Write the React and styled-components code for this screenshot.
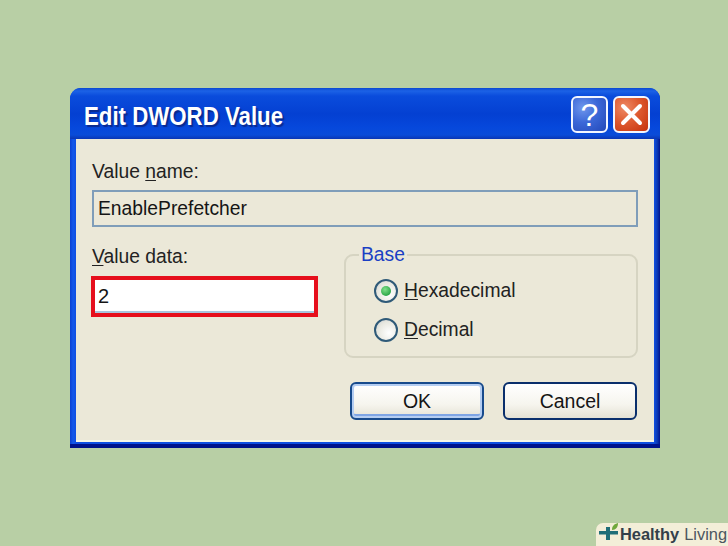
import React from 'react';
import styled, { createGlobalStyle } from 'styled-components';

const GlobalStyle = createGlobalStyle`
  html, body {
    margin: 0;
    padding: 0;
    background: #b8cfa5;
  }
  body {
    font-family: "Liberation Sans", Arial, sans-serif;
  }
`;

const Page = styled.div`
  position: relative;
  width: 728px;
  height: 546px;
  overflow: hidden;
  padding: 88px 0 0 70px;
  box-sizing: border-box;
`;

const Window = styled.div`
  width: 590px;
  height: 360px;
  display: flex;
  flex-direction: column;
  box-sizing: border-box;
  border-radius: 11px 11px 0 0;
  background: linear-gradient(90deg, #0a3fd0 0, #1458ea 3px, #0f4fe2 6px, #0f4fe2 584px, #0a3bb8 587px, #00138c 100%);
  padding: 0 6px 6px;
  box-shadow: inset 0 -4px 0 #00138c;
`;

const TitleBar = styled.div`
  height: 51px;
  flex: none;
  margin: 0 -6px;
  padding: 0 10px 0 14px;
  display: flex;
  align-items: center;
  gap: 5px;
  border-radius: 11px 11px 0 0;
  background: linear-gradient(180deg, #0a48d0 0, #1c62e6 3px, #0a4cdc 8px, #0440d2 26px, #0648dc 40px, #0a4cd8 47px, #0a36b4 100%);
`;

const Title = styled.div`
  flex: 1;
  margin-top: 5px;
  color: #fff;
  font-size: 25px;
  font-weight: bold;
  white-space: nowrap;
  transform: scaleX(0.89);
  transform-origin: left center;
  text-shadow: 2px 2px 1px #0a2a90;
`;

const CaptionButton = styled.div`
  width: 37px;
  height: 37px;
  margin-top: 2px;
  box-sizing: border-box;
  display: flex;
  align-items: center;
  justify-content: center;
  border: 2px solid #f2f6ff;
  border-radius: 6px;
  color: #fff;
  font-size: 32px;
  background: ${p => p.$danger
    ? 'radial-gradient(circle at 30% 30%, #ee8a66 0, #de5a30 45%, #c4300c 100%)'
    : 'radial-gradient(circle at 30% 30%, #6f97ec 0, #3c68d8 45%, #2348b8 100%)'};
`;

const Body = styled.div`
  flex: 1;
  background: #ebe8d8;
  padding: 21px 16px 0;
  border-bottom: 2px solid #f8f6e8;
  display: flex;
  flex-direction: column;
  min-height: 0;
`;

const Label = styled.div`
  font-size: 19.3px;
  line-height: 24px;
  color: #222;
`;

const Key = styled.span`
  text-decoration: underline;
  text-underline-offset: 2px;
`;

const NameField = styled.div`
  height: 37px;
  margin-top: 6px;
  box-sizing: border-box;
  display: flex;
  align-items: center;
  padding-left: 4px;
  border: 2px solid #7f9db9;
  background: #ebe8d8;
  color: #151515;
  font-size: 19.3px;
`;

const Columns = styled.div`
  display: flex;
  justify-content: space-between;
  margin-top: 17px;
`;

const DataColumn = styled.div`
  width: 227px;
  margin-left: -1px;
`;

const DataField = styled.div`
  height: 41px;
  margin-top: 7px;
  box-sizing: border-box;
  display: flex;
  align-items: center;
  padding-left: 3px;
  border: 4px solid #e60f1c;
  background: #fff;
  box-shadow: inset 0 -2px 0 #a9c4dd;
  color: #151515;
  font-size: 20px;
`;

const DataLabel = styled(Label)`
  margin: 1px 0 0 1px;
`;

const Group = styled.fieldset`
  width: 294px;
  height: 114px;
  margin: 0;
  box-sizing: border-box;
  padding: 5px 0 0 28px;
  border: 2px solid #d6d4c2;
  border-radius: 9px;
`;

const GroupTitle = styled.legend`
  margin-left: -15px;
  padding: 0 2px;
  font-size: 19.3px;
  line-height: 22px;
  color: #1a3fc4;
`;

const RadioRow = styled.div`
  height: 39px;
  display: flex;
  align-items: center;
  gap: 6px;
  font-size: 19.3px;
  color: #222;
`;

const Radio = styled.span`
  width: 24px;
  height: 24px;
  flex: none;
  box-sizing: border-box;
  display: flex;
  align-items: center;
  justify-content: center;
  border: 2px solid #2f5a78;
  border-radius: 50%;
  background: radial-gradient(circle at 65% 65%, #fff 0, #e8e8e0 60%, #c8ccd0 100%);
`;

const RadioDot = styled.span`
  width: 10px;
  height: 10px;
  border-radius: 50%;
  background: radial-gradient(circle at 40% 35%, #7fe08a 0, #2ea84a 70%);
`;

const Buttons = styled.div`
  display: flex;
  justify-content: flex-end;
  gap: 19px;
  margin: 24px 1px 0 0;
`;

const Button = styled.div`
  width: 134px;
  height: 38px;
  box-sizing: border-box;
  display: flex;
  align-items: center;
  justify-content: center;
  border: 2px solid ${p => (p.$primary ? '#174a8c' : '#0a2f6c')};
  border-radius: 6px;
  font-size: 19.5px;
  color: #151515;
  background: linear-gradient(180deg, #ffffff 0, #f6f5ee 60%, #e4e1d4 100%);
  box-shadow: ${p => p.$primary
    ? 'inset 0 0 0 2px #b4cdf2, inset 0 -4px 0 #7ea4e4'
    : 'none'};
`;

const Watermark = styled.div`
  position: absolute;
  right: 0;
  bottom: 0;
  width: 132px;
  height: 23px;
  display: flex;
  align-items: center;
  gap: 1px;
  padding-left: 3px;
  box-sizing: border-box;
  background: #f3eed8;
  border-radius: 7px 0 0 0;
  font-size: 16.4px;
  color: #4c5660;
  white-space: nowrap;
`;

const Brand = styled.b`
  color: #33404a;
  margin-right: 4px;
`;

const HelpGlyph = styled.span`
  line-height: 1;
`;

const Logo = styled.svg`
  flex: none;
  margin-top: -6px;
`;

const CloseIcon = () => (
  <svg width="25" height="25" viewBox="0 0 25 25">
    <path d="M4 4 L21 21 M21 4 L4 21" stroke="#fff" strokeWidth="4" strokeLinecap="round" />
  </svg>
);

const LogoIcon = () => (
  <Logo width="20" height="17" viewBox="0 0 20 17">
    <path d="M0 8 H7 V4 H11 V8 H19 V11.5 H11 V17 H7 V11.5 H0 Z" fill="#1f6e78" />
    <path d="M13 7 C13 3 15 1 19 0 C19 4 17 7 13 7 Z" fill="#6fa83c" />
  </Logo>
);

const App = () => {
  return (
    <Page>
      <GlobalStyle />
      <Window>
        <TitleBar>
          <Title>Edit DWORD Value</Title>
          <CaptionButton><HelpGlyph>?</HelpGlyph></CaptionButton>
          <CaptionButton $danger><CloseIcon /></CaptionButton>
        </TitleBar>
        <Body>
          <Label>Value <Key>n</Key>ame:</Label>
          <NameField>EnablePrefetcher</NameField>
          <Columns>
            <DataColumn>
              <DataLabel><Key>V</Key>alue data:</DataLabel>
              <DataField>2</DataField>
            </DataColumn>
            <Group>
              <GroupTitle>Base</GroupTitle>
              <RadioRow>
                <Radio><RadioDot /></Radio>
                <span><Key>H</Key>exadecimal</span>
              </RadioRow>
              <RadioRow>
                <Radio />
                <span><Key>D</Key>ecimal</span>
              </RadioRow>
            </Group>
          </Columns>
          <Buttons>
            <Button $primary>OK</Button>
            <Button>Cancel</Button>
          </Buttons>
        </Body>
      </Window>
      <Watermark>
        <LogoIcon />
        <Brand>Healthy</Brand>Living
      </Watermark>
    </Page>
  );
};

export default App;
